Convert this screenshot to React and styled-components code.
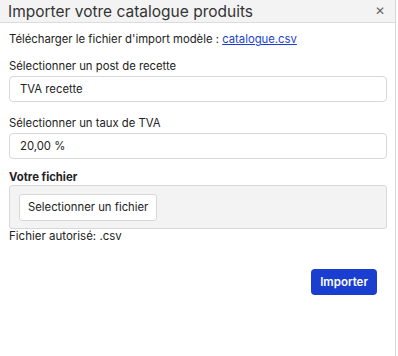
import React from 'react'
import styled, { createGlobalStyle } from 'styled-components'

const GlobalStyle = createGlobalStyle`
  html, body {
    margin: 0;
    padding: 0;
    background: #ffffff;
  }
  body {
    font-family: Inter, "Open Sans", sans-serif;
    color: #222;
  }
`

const Dialog = styled.div`
  width: 395px;
  height: 356px;
  border-right: 1px solid #d6d6d6;
  background: #fff;
  display: flex;
  flex-direction: column;
`

const Header = styled.div`
  height: 22px;
  background: #f3f3f3;
  border-bottom: 1px solid #dcdcdc;
  display: flex;
  align-items: center;
  justify-content: space-between;
  padding: 0 10px 0 8px;
`

const Title = styled.h1`
  margin: 0;
  font-size: 15.5px;
  font-weight: 400;
  color: #333;
`

const Close = styled.button`
  border: none;
  background: none;
  padding: 0;
  font-size: 12px;
  color: #666;
  line-height: 1;
  cursor: pointer;
`

const Body = styled.div`
  padding: 9px 8px 0 9px;
  display: flex;
  flex-direction: column;
`

const Line = styled.p`
  margin: 0;
  font-size: 11.3px;
  color: #222;
  a {
    color: #1a3fd0;
    text-decoration: underline;
  }
`

const Field = styled.div`
  margin-top: ${({ $top }) => $top || 0}px;
  display: flex;
  flex-direction: column;
`

const Label = styled.label`
  font-size: 11.3px;
  font-weight: ${({ $bold }) => ($bold ? 700 : 400)};
  color: #222;
  margin-bottom: ${({ $bold }) => ($bold ? 1 : 3)}px;
`

const Input = styled.div`
  width: 378px;
  box-sizing: border-box;
  height: 26px;
  border: 1px solid #d8d8d8;
  border-radius: 4px;
  padding: 0 10px;
  display: flex;
  align-items: center;
  font-size: 11.3px;
  color: #222;
`

const FileZone = styled.div`
  width: 378px;
  box-sizing: border-box;
  height: 44px;
  background: #f3f3f3;
  border: 1px solid #d8d8d8;
  border-radius: 3px;
  padding: 0 9px;
  display: flex;
  align-items: center;
`

const FileButton = styled.button`
  height: 27px;
  padding: 0 8px;
  background: #fff;
  border: 1px solid #d8d8d8;
  border-radius: 3px;
  font-family: inherit;
  font-size: 11.3px;
  color: #222;
`

const Hint = styled.p`
  margin: 0;
  line-height: 14px;
  font-size: 11.5px;
  color: #222;
`

const Footer = styled.div`
  display: flex;
  justify-content: flex-end;
  padding: 26px 10px 0 0;
`

const Primary = styled.button`
  height: 26px;
  padding: 0 9px;
  background: #1a3fd0;
  color: #fff;
  border: none;
  border-radius: 4px;
  font-family: inherit;
  font-size: 11.5px;
  font-weight: 600;
`

export default function App() {
  return (
    <>
      <GlobalStyle />
      <Dialog>
        <Header>
          <Title>Importer votre catalogue produits</Title>
          <Close>✕</Close>
        </Header>
        <Body>
          <Line>
            Télécharger le fichier d'import modèle : <a href="#">catalogue.csv</a>
          </Line>
          <Field $top={13}>
            <Label>Sélectionner un post de recette</Label>
            <Input>TVA recette</Input>
          </Field>
          <Field $top={14}>
            <Label>Sélectionner un taux de TVA</Label>
            <Input>20,00 %</Input>
          </Field>
          <Field $top={11}>
            <Label $bold>Votre fichier</Label>
            <FileZone>
              <FileButton>Selectionner un fichier</FileButton>
            </FileZone>
            <Hint>Fichier autorisé: .csv</Hint>
          </Field>
          <Footer>
            <Primary>Importer</Primary>
          </Footer>
        </Body>
      </Dialog>
    </>
  )
}
